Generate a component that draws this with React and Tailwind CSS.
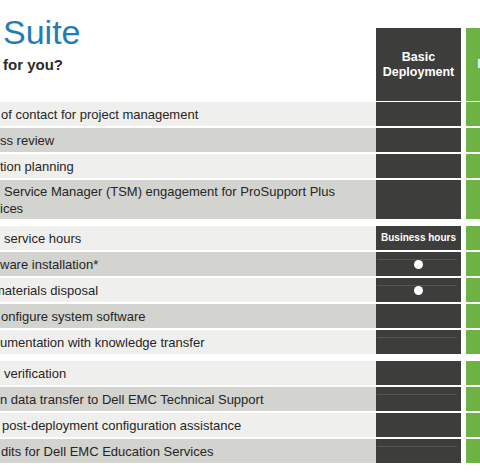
import React from 'react';

const sections = [
  [
    { text: 'of contact for project management', pad: 'pl-[1px]' },
    { text: 'ss review', pad: 'pl-0' },
    { text: 'tion planning', pad: 'pl-0' },
    { text: 'Service Manager (TSM) engagement for ProSupport Plus', text2: 'ices', pad: 'pl-[4px]', tall: true },
  ],
  [
    { text: 'service hours', pad: 'pl-[4px]', basic: 'hours' },
    { text: 'ware installation*', pad: 'pl-0', basic: 'dot', line: true },
    { text: 'materials disposal', pad: '-ml-[6px]', basic: 'dot', line: true },
    { text: 'onfigure system software', pad: 'pl-[1px]' },
    { text: 'umentation with knowledge transfer', pad: 'pl-0', line: true },
  ],
  [
    { text: 'verification', pad: 'pl-[4px]' },
    { text: 'n data transfer to Dell EMC Technical Support', pad: 'pl-0', line: true },
    { text: 'post-deployment configuration assistance', pad: 'pl-[2px]' },
    { text: 'dits for Dell EMC Education Services', pad: 'pl-[1px]', line: true },
  ],
];

// basic deployment column cell
const BasicCell = ({ row }) => (
  <div className="relative flex items-center justify-center w-[85px] bg-[#3d3d3b]">
    {row.line && <div className="absolute left-[1px] right-[4px] top-[7px] h-px bg-[#555553]" />}
    {row.basic === 'dot' && <div className="relative w-[9px] h-[9px] rounded-full bg-white" />}
    {row.basic === 'hours' && (
      <span className="text-[10px] font-bold text-white leading-none">Business hours</span>
    )}
  </div>
);

const App = () => {
  return (
    <div className="w-[480px] h-[472px] overflow-hidden bg-white font-['Liberation_Sans',Arial,sans-serif]">
      <div className="w-[760px]">
        {/* Header */}
        <div className="flex h-[102px]">
          <div className="w-[376px] pl-[3px] pt-[15px]">
            <h1 className="text-[34px] leading-[34px] text-[#1f7db5]">Suite</h1>
            <p className="mt-[7px] text-[15px] leading-[18px] font-bold text-[#2b2b2b]">for you?</p>
          </div>
          <div className="pt-[28px] flex">
            <div className="w-[85px] h-[73px] bg-[#3d3d3b] flex items-center justify-center text-center text-[12.5px] leading-[15px] font-bold text-white">
              Basic
              <br />
              Deployment
            </div>
            <div className="ml-[5px] w-[85px] h-[73px] bg-[#6cb244] flex items-center justify-center text-[12.5px] font-bold text-white">
              ProDeploy
            </div>
          </div>
        </div>

        {/* Rows */}
        <div className="flex flex-col gap-[7px]">
          {sections.map((rows, si) => (
            <div key={si} className="flex flex-col gap-[2px]">
              {rows.map((row, ri) => {
                const bg = ri % 2 === 0 ? 'bg-[#efefed]' : 'bg-[#d3d3cf]';
                return (
                  <div key={ri} className={`flex ${row.tall ? 'h-[39px]' : 'h-[24px]'}`}>
                    <div className={`w-[376px] overflow-hidden flex items-center ${bg}`}>
                      <p className={`${row.pad} text-[13px] leading-[17px] text-[#262626] whitespace-nowrap`}>
                        {row.text}
                        {row.text2 && (
                          <>
                            <br />
                            <span className="-ml-[4px]">{row.text2}</span>
                          </>
                        )}
                      </p>
                    </div>
                    <BasicCell row={row} />
                    <div className="w-[5px]" />
                    <div className="w-[85px] bg-[#6cb244]" />
                  </div>
                );
              })}
            </div>
          ))}
        </div>
      </div>
    </div>
  );
};

export default App;
